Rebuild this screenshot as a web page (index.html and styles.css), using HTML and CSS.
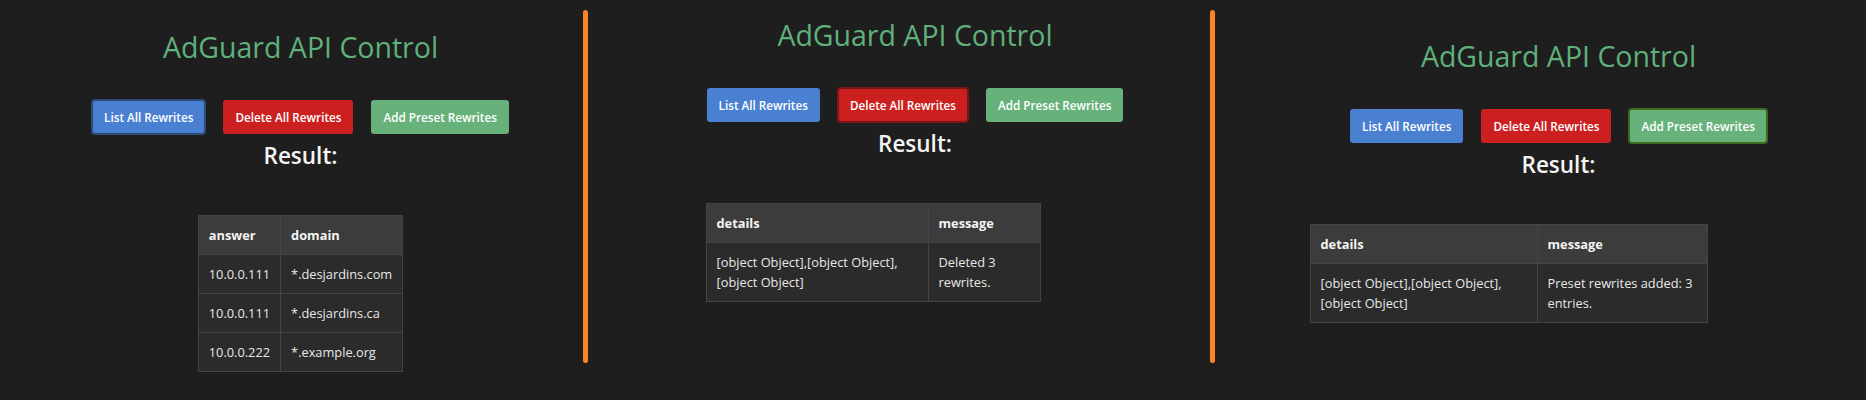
FILE: index.html
```html
<!DOCTYPE html>
<html lang="en">
<head>
<meta charset="utf-8">
<title>AdGuard API Control</title>
<link rel="stylesheet" href="styles.css">
</head>
<body>
<div class="board">
  <section class="panel panel-1">
    <div class="app">
      <h1 class="title">AdGuard API Control</h1>
      <div class="actions">
        <button class="btn btn-blue is-focus">List All Rewrites</button>
        <button class="btn btn-red">Delete All Rewrites</button>
        <button class="btn btn-green">Add Preset Rewrites</button>
      </div>
      <h2 class="result-title">Result:</h2>
      <table class="result">
        <thead><tr><th>answer</th><th>domain</th></tr></thead>
        <tbody>
          <tr><td>10.0.0.111</td><td>*.desjardins.com</td></tr>
          <tr><td>10.0.0.111</td><td>*.desjardins.ca</td></tr>
          <tr><td>10.0.0.222</td><td>*.example.org</td></tr>
        </tbody>
      </table>
    </div>
  </section>
  <div class="divider"></div>
  <section class="panel panel-2">
    <div class="app">
      <h1 class="title">AdGuard API Control</h1>
      <div class="actions">
        <button class="btn btn-blue">List All Rewrites</button>
        <button class="btn btn-red is-focus">Delete All Rewrites</button>
        <button class="btn btn-green">Add Preset Rewrites</button>
      </div>
      <h2 class="result-title">Result:</h2>
      <table class="result result-wrap">
        <thead><tr><th class="col-a">details</th><th class="col-b">message</th></tr></thead>
        <tbody>
          <tr><td>[object Object],[object Object],[object Object]</td><td>Deleted 3 rewrites.</td></tr>
        </tbody>
      </table>
    </div>
  </section>
  <div class="divider"></div>
  <section class="panel panel-3">
    <div class="app">
      <h1 class="title">AdGuard API Control</h1>
      <div class="actions">
        <button class="btn btn-blue">List All Rewrites</button>
        <button class="btn btn-red">Delete All Rewrites</button>
        <button class="btn btn-green is-focus">Add Preset Rewrites</button>
      </div>
      <h2 class="result-title">Result:</h2>
      <table class="result result-wrap">
        <thead><tr><th class="col-a">details</th><th class="col-b">message</th></tr></thead>
        <tbody>
          <tr><td>[object Object],[object Object],[object Object]</td><td>Preset rewrites added: 3 entries.</td></tr>
        </tbody>
      </table>
    </div>
  </section>
</div>
</body>
</html>
```
FILE: styles.css
```css
* { box-sizing: border-box; }
html, body { margin: 0; padding: 0; }
body {
  background: #1e1e1e;
  font-family: "Open Sans", "Noto Sans", sans-serif;
  color: #eeeeee;
  width: 1866px;
  height: 400px;
  overflow: hidden;
}
.board {
  display: flex;
  height: 400px;
}
.panel { display: flex; flex-direction: column; align-items: center; }
.panel-1 { width: 583px; padding: 27px 0 0 18px; }
.panel-2 { width: 622px; padding: 15px 0 0 32px; }
.panel-3 { flex: 1; padding: 36px 0 0 36px; }
.divider {
  width: 5px;
  height: 353px;
  margin-top: 10px;
  background: #fd8328;
  border-radius: 3px;
  flex: none;
}
.app { display: flex; flex-direction: column; align-items: center; }
.title {
  margin: 0;
  font-size: 28.5px;
  line-height: 40px;
  font-weight: 400;
  color: #5fb07b;
  white-space: nowrap;
}
.actions {
  display: flex;
  gap: 18px;
  margin-top: 33px;
}
.btn {
  font-family: inherit;
  font-size: 11.7px;
  font-weight: 600;
  line-height: 16px;
  color: #ffffff;
  border: none;
  border-radius: 3px;
  padding: 9px 12px;
  height: 34px;
  white-space: nowrap;
  cursor: pointer;
}
.btn-blue { background: #4a80d2; }
.btn-red { background: #cc1f1f; }
.btn-green { background: #66b27a; }
.btn.is-focus { outline: 2px solid #2c4b7a; outline-offset: -1px; }
.btn-red.is-focus { outline-color: #7a1616; }
.btn-green.is-focus { outline-color: #3d6b20; }
.result-title {
  margin: 7px 0 0;
  font-size: 22.5px;
  line-height: 30px;
  font-weight: 600;
  color: #f4f4f4;
}
.result {
  margin-top: 44px;
  border-collapse: collapse;
  font-size: 12.8px;
  line-height: 20px;
  color: #e8e8e8;
}
.result th, .result td {
  border: 1px solid #444444;
  padding: 9px 10px;
  text-align: left;
  vertical-align: top;
}
.result th { background: #3c3c3c; font-weight: 700; color: #f4f4f4; }
.result td { background: #2b2b2b; }
.panel-2 .result { width: 335px; margin-right: 84px; }
.panel-2 .col-a { width: 222px; }
.panel-3 .result { width: 398px; margin-right: 100px; }
.panel-3 .col-a { width: 227px; }
```
